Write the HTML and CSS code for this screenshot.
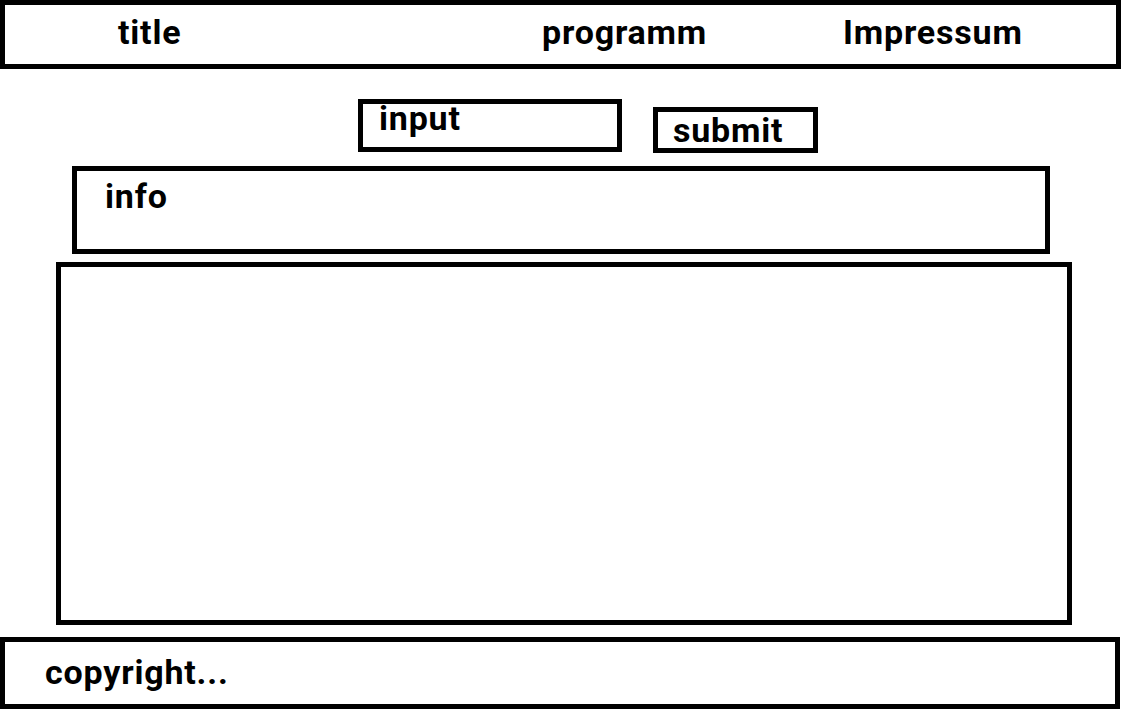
FILE: index.html
```html
<!DOCTYPE html>
<html lang="en">
<head>
    <meta charset="UTF-8">
    <meta name="viewport" content="width=device-width, initial-scale=1.0">
    <title>programm</title>
    <link rel="stylesheet" href="styles.css">
</head>
<body>

    <header class="topbar">
        <div class="nav-item">title</div>
        <div class="nav-item">programm</div>
        <div class="nav-item">Impressum</div>
    </header>

    <div class="search-row">
        <div class="input-box">input</div>
        <button class="submit-box">submit</button>
    </div>

    <div class="info-box">info</div>

    <div class="content-box"></div>

    <footer class="footer">copyright...</footer>

</body>
</html>
```

FILE: styles.css
```css
* {
    box-sizing: border-box;
}
body {
    margin: 0;
    background-color: #fff;
    color: #000;
    font-family: Roboto, "DejaVu Sans", sans-serif;
    font-weight: 700;
    font-size: 34px;
    letter-spacing: 0.8px;
    line-height: 1;
}
.topbar {
    width: 1121px;
    height: 69px;
    border: 5px solid #000;
    display: grid;
    grid-template-columns: 424px 301px 1fr;
    padding: 10px 0 0 113px;
}
.search-row {
    display: flex;
    align-items: flex-start;
    gap: 31px;
    margin-top: 30px;
    padding-left: 358px;
}
.input-box {
    width: 264px;
    height: 53px;
    border: 5px solid #000;
    line-height: 29px;
    padding-left: 16px;
}
.submit-box {
    width: 165px;
    height: 46px;
    margin-top: 8px;
    border: 5px solid #000;
    background: #fff;
    font: inherit;
    letter-spacing: inherit;
    line-height: 32px;
    color: #000;
    text-align: left;
    padding: 0 0 0 15px;
}
.info-box {
    width: 978px;
    height: 88px;
    margin: 13px 0 0 72px;
    border: 5px solid #000;
    padding: 8px 0 0 28px;
}
.content-box {
    width: 1016px;
    height: 363px;
    margin: 8px 0 0 56px;
    border: 5px solid #000;
}
.footer {
    width: 1120px;
    height: 72px;
    margin-top: 12px;
    border: 5px solid #000;
    padding: 13px 0 0 40px;
}
```
